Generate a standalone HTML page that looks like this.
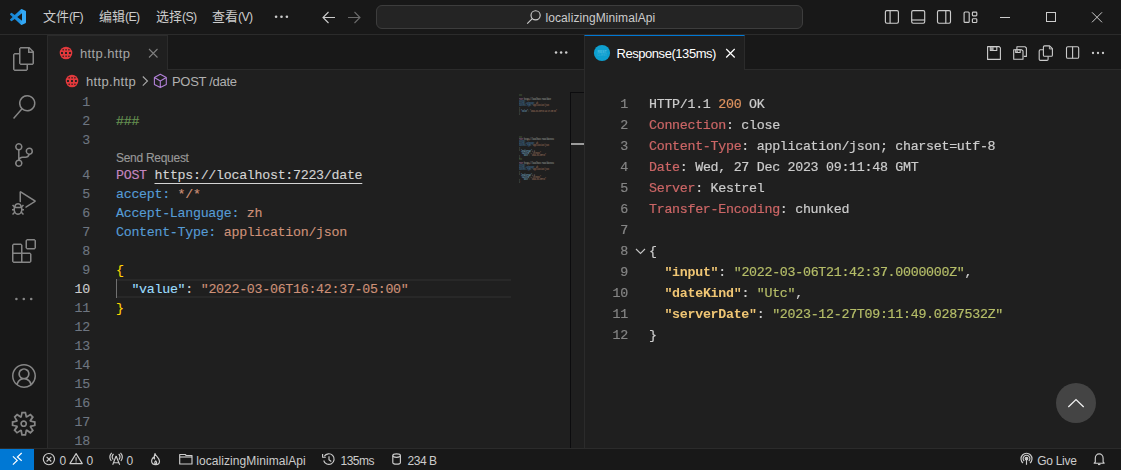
<!DOCTYPE html>
<html lang="zh">
<head>
<meta charset="utf-8">
<title>localizingMinimalApi</title>
<style>
*{box-sizing:border-box;margin:0;padding:0}
html,body{width:1121px;height:470px;overflow:hidden;background:#1f1f1f}
body{position:relative;font-family:"Liberation Sans","Noto Sans CJK SC",sans-serif;color:#cccccc;font-size:13px}
.abs{position:absolute}
#titlebar{left:0;top:0;width:1121px;height:35px;background:#181818;border-bottom:1px solid #2b2b2b}
#activity{left:0;top:35px;width:48px;height:413px;background:#181818;border-right:1px solid #2b2b2b}
#status{left:0;top:448px;width:1121px;height:22px;background:#181818;border-top:1px solid #2b2b2b}
#tabsL{left:48px;top:35px;width:536px;height:35px;background:#181818;border-bottom:1px solid #2b2b2b}
#tabsR{left:585px;top:35px;width:536px;height:35px;background:#181818;border-bottom:1px solid #2b2b2b}
#sep{left:584px;top:35px;width:1px;height:413px;background:#2b2b2b}
.tab{position:absolute;top:0;height:35px;background:#1f1f1f;border-right:1px solid #2b2b2b}
.t{position:absolute;white-space:pre;line-height:1}
.mono{font-family:"Liberation Mono","DejaVu Sans Mono",monospace;font-size:13.3px;letter-spacing:-.284px}
.menu{top:10px;font-size:13px;color:#cccccc}
.la{font-size:12.3px;letter-spacing:-.6px}
.st{top:455px;font-size:12px;color:#cccccc}
.ln{position:absolute;left:48px;width:42px;padding-top:1px;text-align:right;color:#6e7681;white-space:pre;line-height:19px;height:19px}
.cl{position:absolute;left:116px;padding-top:1px;white-space:pre;line-height:19px;height:19px}
.rn{position:absolute;left:585px;width:43px;text-align:right;color:#858585;white-space:pre;line-height:21px;height:21px}
.rl{position:absolute;left:649px;white-space:pre;line-height:21px;height:21px;color:#cccccc}
.g{color:#6a9955}.p{color:#c586c0}.u{color:#d4d4d4;text-decoration:underline;text-underline-offset:4px;text-decoration-thickness:1px}
.b{color:#569cd6}.o{color:#ce9178}.y{color:#ffd700}.k{color:#9cdcfe}.w{color:#cccccc}
.r{color:#cc6666}.n{color:#de935f}.j{color:#f0c674;font-weight:bold;-webkit-text-stroke:0}.s{color:#b5bd68}
svg{position:absolute;overflow:visible}
.mm{position:absolute;left:519px;top:92.6px;white-space:pre;font-family:"Liberation Mono",monospace;font-size:5px;line-height:3px;font-weight:bold;color:#cccccc;opacity:.62;transform:scale(.33328,.66667);transform-origin:0 0}
.mm i{font-style:normal}.u2{color:#d4d4d4}
</style>
</head>
<body>
<!-- TITLE BAR -->
<div id="titlebar" class="abs">
  <svg class="abs" style="left:10px;top:9px" width="16" height="16" viewBox="0 0 100 100"><defs><linearGradient id="vg" x1="0" y1="0" x2="1" y2="0"><stop offset="0" stop-color="#1684d2"/><stop offset=".6" stop-color="#1f92e2"/><stop offset=".75" stop-color="#33a8f5"/><stop offset="1" stop-color="#33a8f5"/></linearGradient></defs><path fill="url(#vg)" d="M96.46 10.8L75.86.87a6.230 6.230 0 0 0-7.100 1.210L29.350 38.040 12.190 25.010a4.160 4.160 0 0 0-5.320.240l-5.500 5.010a4.170 4.170 0 0 0 0 6.160L16.250 50 1.360 63.580a4.170 4.170 0 0 0 0 6.160l5.500 5.010a4.160 4.160 0 0 0 5.320.240l17.160-13.030 39.410 35.960a6.220 6.220 0 0 0 7.100 1.210l20.600-9.910A6.250 6.250 0 0 0 100 83.590V16.410a6.250 6.250 0 0 0-3.540-5.610zM75.020 72.700L45.110 50l29.910-22.700z"/></svg>
  <span class="t menu" style="left:43px">文件<span class="la">(F)</span></span>
  <span class="t menu" style="left:99px">编辑<span class="la">(E)</span></span>
  <span class="t menu" style="left:156px">选择<span class="la">(S)</span></span>
  <span class="t menu" style="left:212px">查看<span class="la">(V)</span></span>
  <svg class="abs" style="left:0;top:0" width="1121" height="35" viewBox="0 0 1121 35" fill="none">
    <g fill="#cccccc"><circle cx="276.1" cy="16.8" r="1.3"/><circle cx="281.5" cy="16.8" r="1.3"/><circle cx="286.9" cy="16.8" r="1.3"/></g>
    <path d="M335 17.5H323M328.5 12L323 17.5L328.5 23" stroke="#cccccc" stroke-width="1.1"/>
    <path d="M348 17.5H360M354.5 12L360 17.5L354.5 23" stroke="#6b6b6b" stroke-width="1.1"/>
    <!-- layout icons -->
    <g stroke="#cccccc" stroke-width="1.15">
      <rect x="885.400" y="10.600" width="13" height="12.600" rx="1.400"/><path d="M890.100 10.600V23.200"/>
      <rect x="911.700" y="10.600" width="13" height="12.600" rx="1.400"/><path d="M911.700 20H924.700"/>
      <rect x="937.500" y="10.600" width="13" height="12.600" rx="1.400"/><path d="M945.800 10.600V23.200"/>
      <rect x="964.100" y="12" width="5.100" height="10.400" rx="1"/><rect x="972.400" y="12.100" width="4.400" height="3.800" rx=".8"/><rect x="972.400" y="18.700" width="4.400" height="3.800" rx=".8"/>
    </g><g stroke="#cccccc" stroke-width="1">
      <!-- window controls -->
      <path d="M1000 17.500H1010"/>
      <rect x="1046.500" y="12.500" width="9" height="9"/>
      <path d="M1092 12.300L1102 22.300M1102 12.300L1092 22.300" stroke-width="1"/>
    </g>
  </svg>
  <div class="abs" style="left:376px;top:5px;width:427px;height:24px;border:1px solid #3d3d3d;border-radius:6px;background:#242424"></div>
  <svg class="abs" style="left:0;top:0" width="1121" height="35" viewBox="0 0 1121 35" fill="none"><circle cx="535.600" cy="15.300" r="4.600" stroke="#cccccc" stroke-width="1.150"/><path d="M532.300 18.700L527.200 23.700" stroke="#cccccc" stroke-width="1.150"/></svg>
  <span class="t" style="left:545.5px;top:12px;font-size:12px;color:#cccccc;letter-spacing:.09px">localizingMinimalApi</span>
</div>
<!-- ACTIVITY BAR -->
<div id="activity" class="abs"></div>
<svg class="abs" style="left:12px;top:47px" width="24" height="24" viewBox="0 0 24 24"><path fill="#868686" d="M17.5 0h-9L7 1.5V6H2.5L1 7.5v15.07L2.5 24h12.07L16 22.57V18h4.7l1.3-1.43V4.5L17.5 0zm0 2.12l2.38 2.38H17.5V2.12zm-3 20.38h-12v-15H7v9.07L8.5 18h6v4.5zm6-6h-12v-15H16V6h4.5v10.5z"/></svg><svg class="abs" style="left:12px;top:95px" width="24" height="24" viewBox="0 0 24 24"><path fill="#868686" d="M15.25 0a8.25 8.25 0 0 0-6.18 13.72L1 22.88l1.12 1 8.05-9.12A8.251 8.251 0 1 0 15.25.01V0zm0 15a6.75 6.75 0 1 1 0-13.5 6.75 6.75 0 0 1 0 13.5z"/></svg><svg class="abs" style="left:12px;top:143px" width="24" height="24" viewBox="0 0 24 24"><path fill="#868686" d="M21.007 8.222A3.738 3.738 0 0 0 15.045 5.2a3.737 3.737 0 0 0 1.156 6.583 2.988 2.988 0 0 1-2.668 1.67h-2.99a4.456 4.456 0 0 0-2.989 1.165V7.4a3.737 3.737 0 1 0-1.494 0v9.117a3.776 3.776 0 1 0 1.816.099 2.99 2.99 0 0 1 2.668-1.667h2.99a4.484 4.484 0 0 0 4.223-3.039 3.736 3.736 0 0 0 3.25-3.687zM4.565 3.738a2.242 2.242 0 1 1 4.484 0 2.242 2.242 0 0 1-4.484 0zm4.484 16.441a2.242 2.242 0 1 1-4.484 0 2.242 2.242 0 0 1 4.484 0zm8.221-9.715a2.242 2.242 0 1 1 0-4.485 2.242 2.242 0 0 1 0 4.485z"/></svg><svg class="abs" style="left:12px;top:191px" width="24" height="24" viewBox="0 0 24 24"><path fill="#868686" d="M10.94 13.5l-1.32 1.32a3.73 3.73 0 0 0-7.24 0L1.06 13.5 0 14.56l1.72 1.72-.22.22V18H0v1.5h1.5v.08c.077.489.214.966.41 1.42L0 22.94 1.06 24l1.65-1.65A4.308 4.308 0 0 0 6 24a4.31 4.31 0 0 0 3.29-1.65L10.94 24 12 22.94 10.09 21c.198-.464.336-.951.41-1.45v-.1H12V18h-1.5v-1.5l-.22-.22L12 14.56l-1.06-1.06zM6 13.5a2.25 2.25 0 0 1 2.25 2.25h-4.5A2.25 2.25 0 0 1 6 13.5zm3 6a3.33 3.33 0 0 1-3 3 3.33 3.33 0 0 1-3-3v-2.250h6v2.250zm14.76-9.9v1.26L13.5 17.37V15.6l8.5-5.370L9 2v9.46a5.070 5.070 0 0 0-1.500-.720V.630L8.640 0l15.120 9.600z"/></svg><svg class="abs" style="left:12px;top:239px" width="24" height="24" viewBox="0 0 24 24"><path fill="#868686" d="M13.5 1.5L15 0h7.5L24 1.5V9l-1.5 1.5H15L13.5 9V1.5zm1.5 0V9h7.5V1.5H15zM0 15V6l1.5-1.5H9L10.5 6v7.5H18l1.5 1.5v7.5L18 24H1.5L0 22.5V15zm9-1.5V6H1.5v7.5H9zM9 15H1.5v7.5H9V15zm1.5 7.5H18V15h-7.5v7.5z"/></svg><svg class="abs" style="left:12px;top:287px" width="24" height="24" viewBox="0 0 24 24"><circle cx="4.4" cy="12" r="1.3" fill="#868686"/><circle cx="11.8" cy="12" r="1.3" fill="#868686"/><circle cx="19.2" cy="12" r="1.3" fill="#868686"/></svg><svg class="abs" style="left:12px;top:364px" width="24" height="24" viewBox="0 0 16 16"><path fill="#868686" fill-rule="evenodd" d="M16 7.992C16 3.580 12.416 0 8 0S0 3.580 0 7.992c0 2.430 1.104 4.620 2.832 6.090.16.016.32.016.32.032.144.112.288.224.448.336.080.048.144.111.224.175A7.980 7.980 0 0 0 8.016 16a7.980 7.980 0 0 0 4.480-1.375c.080-.048.144-.111.224-.160.144-.111.304-.223.448-.335.016-.016.032-.016.032-.032 1.696-1.487 2.800-3.676 2.800-6.106zm-8 7.001c-1.504 0-2.880-.480-4.016-1.279.016-.128.048-.255.080-.383a4.170 4.170 0 0 1 .416-.991c.176-.304.384-.576.640-.816.240-.240.528-.463.816-.639.304-.176.624-.304.976-.400A4.150 4.150 0 0 1 8 10.342a4.185 4.185 0 0 1 2.928 1.166c.368.368.656.800.864 1.295.112.288.192.592.240.911A7.030 7.030 0 0 1 8 14.993zm-2.448-7.400a2.490 2.490 0 0 1-.208-1.024c0-.351.064-.703.208-1.023.144-.320.336-.607.576-.847.240-.240.528-.431.848-.575.320-.144.672-.208 1.024-.208.368 0 .704.064 1.024.208.320.144.608.336.848.575.240.240.432.528.576.847.144.320.208.672.208 1.023 0 .368-.064.704-.208 1.023a2.840 2.840 0 0 1-.576.848 2.840 2.840 0 0 1-.848.575 2.715 2.715 0 0 1-2.064 0 2.840 2.840 0 0 1-.848-.575 2.526 2.526 0 0 1-.560-.848zm7.424 5.306c0-.032-.016-.048-.016-.080a5.220 5.220 0 0 0-.688-1.406 4.883 4.883 0 0 0-1.088-1.135 5.207 5.207 0 0 0-1.040-.608 2.820 2.820 0 0 0 .464-.383 4.200 4.200 0 0 0 .624-.784 3.624 3.624 0 0 0 .528-1.934 3.710 3.710 0 0 0-.288-1.470 3.799 3.799 0 0 0-.816-1.199 3.845 3.845 0 0 0-1.200-.800 3.720 3.720 0 0 0-1.472-.287 3.720 3.720 0 0 0-1.472.288 3.631 3.631 0 0 0-1.200.815 3.840 3.840 0 0 0-.800 1.199 3.710 3.710 0 0 0-.288 1.470c0 .352.048.688.144 1.007.096.336.224.640.400.927.160.288.384.544.624.784.144.144.304.271.480.383a5.120 5.120 0 0 0-1.040.624c-.416.320-.784.703-1.088 1.119a4.999 4.999 0 0 0-.688 1.406c-.16.032-.16.064-.16.080C1.776 11.636.992 9.910.992 7.992.992 4.140 4.144.991 8 .991s7.008 3.149 7.008 7.001a6.960 6.960 0 0 1-2.032 4.907z"/></svg><svg class="abs" style="left:10.4px;top:410px" width="27.4" height="27.4" viewBox="0 0 16 16"><path fill="#868686" fill-rule="evenodd" d="M9.1 4.4L8.6 2H7.4l-.5 2.4-.7.3-2-1.3-.9.8 1.3 2-.2.7-2.4.5v1.2l2.4.5.3.8-1.3 2 .8.8 2-1.3.8.3.4 2.300h1.200l.5-2.400.8-.3 2 1.300.8-.8-1.300-2 .3-.8 2.300-.4V7.400l-2.400-.5-.3-.8 1.300-2-.8-.8-2 1.300-.7-.2zM9.400 1l.5 2.400L12 2.100l2 2-1.400 2.100 2.400.4v2.800l-2.400.5L14 12l-2 2-2.100-1.400-.5 2.400H6.600l-.5-2.400L4 13.900l-2-2 1.400-2.100L1 9.400V6.600l2.400-.5L2.100 4l2-2 2.100 1.400.4-2.400h2.800zm.6 7c0 1.100-.9 2-2 2s-2-.9-2-2 .9-2 2-2 2 .9 2 2zM8 9c.6 0 1-.4 1-1s-.4-1-1-1-1 .4-1 1 .4 1 1 1z"/></svg>
<!-- LEFT TABS -->
<div id="tabsL" class="abs">
  <div class="tab" style="left:0;width:120px;border-top:1px solid #2b2b2b"></div>
</div>
<svg class="abs" style="left:58px;top:44.9px" width="16" height="16" viewBox="-8 -8 16 16"><circle r="6.3" fill="#e2393c"/><g fill="#1f1f1f"><rect x="-4.95" y="-0.95" width="1.9" height="1.9" rx=".3"/><rect x="-0.95" y="-0.95" width="1.9" height="1.9" rx=".3"/><rect x="2.95" y="-0.95" width="1.9" height="1.9" rx=".3"/><rect x="-3.55" y="-4.00" width="1.5" height="1.5" rx=".3" opacity=".8"/><rect x="-0.65" y="-4.00" width="1.5" height="1.5" rx=".3" opacity=".8"/><rect x="2.15" y="-4.00" width="1.5" height="1.5" rx=".3" opacity=".8"/><rect x="-3.55" y="2.60" width="1.5" height="1.5" rx=".3" opacity=".8"/><rect x="-0.65" y="2.60" width="1.5" height="1.5" rx=".3" opacity=".8"/><rect x="2.15" y="2.60" width="1.5" height="1.5" rx=".3" opacity=".8"/></g></svg>
<span class="t" style="left:80px;top:47px;font-size:13px;color:#a6a6a6;letter-spacing:.37px">http.http</span>
<svg class="abs" style="left:0;top:0" width="1121" height="470" viewBox="0 0 1121 470" fill="none">
  <path d="M149 49L157.500 57.500M157.500 49L149 57.500" stroke="#7f7f7f" stroke-width="1.1"/>
  <g fill="#cccccc"><circle cx="556" cy="52.600" r="1.250"/><circle cx="561.100" cy="52.600" r="1.250"/><circle cx="566.200" cy="52.600" r="1.250"/></g>
  <!-- breadcrumb chevron + cube -->
  <path d="M142.800 76.500L147.500 81L142.800 85.700" stroke="#a9a9a9" stroke-width="1.1"/>
  <path d="M160.300 74.300L166.300 77.600V84.400L160.300 87.600L154.400 84.400V77.600ZM154.400 77.600L160.300 80.900L166.300 77.600M160.300 80.900V87.600" stroke="#b180d7" stroke-width="1.1" stroke-linejoin="round"/>
  <!-- right tab close + actions -->
</svg>
<!-- BREADCRUMB -->
<svg class="abs" style="left:64.2px;top:73.1px" width="16" height="16" viewBox="-8 -8 16 16"><circle r="6.3" fill="#e2393c"/><g fill="#1f1f1f"><rect x="-4.95" y="-0.95" width="1.9" height="1.9" rx=".3"/><rect x="-0.95" y="-0.95" width="1.9" height="1.9" rx=".3"/><rect x="2.95" y="-0.95" width="1.9" height="1.9" rx=".3"/><rect x="-3.55" y="-4.00" width="1.5" height="1.5" rx=".3" opacity=".8"/><rect x="-0.65" y="-4.00" width="1.5" height="1.5" rx=".3" opacity=".8"/><rect x="2.15" y="-4.00" width="1.5" height="1.5" rx=".3" opacity=".8"/><rect x="-3.55" y="2.60" width="1.5" height="1.5" rx=".3" opacity=".8"/><rect x="-0.65" y="2.60" width="1.5" height="1.5" rx=".3" opacity=".8"/><rect x="2.15" y="2.60" width="1.5" height="1.5" rx=".3" opacity=".8"/></g></svg>
<span class="t" style="left:86px;top:75px;font-size:13px;color:#b0b0b0;letter-spacing:.33px">http.http</span>
<span class="t" style="left:172px;top:75px;font-size:13px;color:#b0b0b0;letter-spacing:-.3px">POST /date</span>
<!-- LEFT EDITOR -->
<div class="abs" style="left:116px;top:279px;width:395px;height:19px;border-top:2px solid #282828;border-bottom:2px solid #282828"></div>
<div class="abs" style="left:116px;top:279px;width:1px;height:19px;background:#707070"></div>
<div id="edL" class="mono" style="-webkit-text-stroke:.12px">
<div class="ln" style="top:92px">1</div>
<div class="ln" style="top:111px">2</div><div class="cl g" style="top:111px">###</div>
<div class="ln" style="top:130px">3</div>
<div class="t" style="left:116px;top:152px;font-family:'Liberation Sans',sans-serif;font-size:12px;color:#999999">Send Request</div>
<div class="ln" style="top:165px">4</div><div class="cl" style="top:165px"><span class="p">POST</span> <span class="u">https://localhost:7223/date</span></div>
<div class="ln" style="top:184px">5</div><div class="cl" style="top:184px"><span class="b">accept:</span> <span class="o">*/*</span></div>
<div class="ln" style="top:203px">6</div><div class="cl" style="top:203px"><span class="b">Accept-Language:</span> <span class="o">zh</span></div>
<div class="ln" style="top:222px">7</div><div class="cl" style="top:222px"><span class="b">Content-Type:</span> <span class="o">application/json</span></div>
<div class="ln" style="top:241px">8</div>
<div class="ln" style="top:260px">9</div><div class="cl y" style="top:260px">{</div>
<div class="ln" style="top:279px;color:#cccccc">10</div><div class="cl" style="top:279px">  <span class="k">"value"</span><span class="w">:</span> <span class="o">"2022-03-06T16:42:37-05:00"</span></div>
<div class="ln" style="top:298px">11</div><div class="cl y" style="top:298px">}</div>
<div class="ln" style="top:317px">12</div>
<div class="ln" style="top:336px">13</div>
<div class="ln" style="top:355px">14</div>
<div class="ln" style="top:374px">15</div>
<div class="ln" style="top:393px">16</div>
<div class="ln" style="top:412px">17</div>
<div class="ln" style="top:431px">18</div>
</div>
<div class="mm">
<i class="g">###</i>

<i class="p">POST</i> <i class="u2">https://localhost:7223/date</i>
<i class="b">accept:</i> <i class="o">*/*</i>
<i class="b">Accept-Language:</i> <i class="o">zh</i>
<i class="b">Content-Type:</i> <i class="o">application/json</i>

<i class="w">{</i>
  <i class="k">"value"</i>: <i class="o">"2022-03-06T16:42:37-05:00"</i>
<i class="w">}</i>











<i class="g">###</i>
<i class="p">POST</i> <i class="u2">https://localhost:7223/dateutc</i>
<i class="b">accept:</i> <i class="o">*/*</i>
<i class="b">Accept-Language:</i> <i class="o">zh</i>
<i class="b">Content-Type:</i> <i class="o">application/json</i>

<i class="w">{</i>
  <i class="k">"mediaType"</i>: <i class="w">1,</i>
  <i class="k">"culture"</i>: <i class="o">"zh-Hans"</i>,
    <i class="k">"date"</i>: <i class="o">"2022-03-06T16"</i>
<i class="w">}</i>
<i class="g">###</i>

<i class="p">POST</i> <i class="u2">https://localhost:7223/dateutc</i>
<i class="b">accept:</i> <i class="o">*/*</i>
<i class="b">Accept-Language:</i> <i class="o">zh</i>
<i class="b">Content-Type:</i> <i class="o">application/json</i>

<i class="w">{</i>
  <i class="k">"mediaType"</i>: <i class="w">1,</i>
  <i class="k">"culture"</i>: <i class="o">"zh-Hans"</i>,
    <i class="k">"date"</i>: <i class="o">"2022-03-06T16"</i>
<i class="w">}</i></div>
<!-- overview ruler -->
<div class="abs" style="left:570px;top:92px;width:14px;height:356px;border-left:1px solid #0c0c0e;border-top:1px solid #0c0c0e"></div>
<div class="abs" style="left:571px;top:143px;width:13px;height:2px;background:#9c9c9c"></div>
<div id="sep" class="abs"></div>
<!-- RIGHT TABS -->
<div id="tabsR" class="abs">
  <div class="tab" style="left:-1px;width:161px;border-top:1px solid #0078d4;border-left:1px solid #2b2b2b"></div>
</div>
<svg class="abs" style="left:594px;top:45px" width="16" height="16" viewBox="0 0 16 16"><circle cx="8" cy="8" r="8.1" fill="#0e9fcf"/><text x="8" y="7.600" font-size="3.400" font-weight="bold" fill="#4fbce0" text-anchor="middle" font-family="Liberation Sans, sans-serif">REST</text><text x="8" y="11" font-size="2.800" fill="#3fb4dc" text-anchor="middle" font-family="Liberation Sans, sans-serif">CLIENT</text></svg>
<span class="t" style="left:616.5px;top:47px;font-size:13px;color:#ffffff;letter-spacing:-.45px">Response(135ms)</span>
<!-- RIGHT PANE -->
<div id="edR" class="mono" style="will-change:transform;-webkit-text-stroke:.2px">
<div class="rn" style="top:94px">1</div><div class="rl" style="top:94px">HTTP/1.1 <span class="n">200</span> OK</div>
<div class="rn" style="top:115px">2</div><div class="rl" style="top:115px"><span class="r">Connection</span>: close</div>
<div class="rn" style="top:136px">3</div><div class="rl" style="top:136px"><span class="r">Content-Type</span>: application/json; charset=utf-8</div>
<div class="rn" style="top:157px">4</div><div class="rl" style="top:157px"><span class="r">Date</span>: Wed, 27 Dec 2023 09:11:48 GMT</div>
<div class="rn" style="top:178px">5</div><div class="rl" style="top:178px"><span class="r">Server</span>: Kestrel</div>
<div class="rn" style="top:199px">6</div><div class="rl" style="top:199px"><span class="r">Transfer-Encoding</span>: chunked</div>
<div class="rn" style="top:220px">7</div>
<div class="rn" style="top:241px">8</div><div class="rl" style="top:241px">{</div>
<div class="rn" style="top:262px">9</div><div class="rl" style="top:262px">  <span class="j">"input"</span>: <span class="s">"2022-03-06T21:42:37.0000000Z"</span>,</div>
<div class="rn" style="top:283px">10</div><div class="rl" style="top:283px">  <span class="j">"dateKind"</span>: <span class="s">"Utc"</span>,</div>
<div class="rn" style="top:304px">11</div><div class="rl" style="top:304px">  <span class="j">"serverDate"</span>: <span class="s">"2023-12-27T09:11:49.0287532Z"</span></div>
<div class="rn" style="top:325px">12</div><div class="rl" style="top:325px">}</div>
</div>
<svg class="abs" style="left:0;top:0" width="1121" height="470" viewBox="0 0 1121 470" fill="none">
  <path d="M726.200 49L734.700 57.500M734.700 49L726.200 57.500" stroke="#ffffff" stroke-width="1.2"/>
  <path d="M636 249L640.500 253.500L645 249" stroke="#c5c5c5" stroke-width="1.1"/>
  <circle cx="1076" cy="403" r="20" fill="#444444"/>
  <path d="M1068.300 407L1076 399.600L1083.700 407" stroke="#f0f0f0" stroke-width="1.300"/>
  <!-- editor actions -->
  <g stroke="#cccccc" stroke-width="1.1" stroke-linejoin="round">
    <path d="M987.600 46.600H999.200L1000.400 47.800V59.400H987.600Z"/><rect x="990.300" y="46.600" width="6.500" height="3.900"/><rect x="990.800" y="47.100" width="2.800" height="3" fill="#a6a6a6" stroke="none"/>
    <path d="M1016.900 49.200V46.800H1025.200L1026.400 48V56.400H1023.800"/><path d="M1013.700 49.800H1021.800L1023 51V59.200H1013.700Z"/><rect x="1015.700" y="49.800" width="4.500" height="2.700"/><rect x="1016.200" y="50.300" width="1.700" height="1.800" fill="#a6a6a6" stroke="none"/>
    <path d="M1044.600 45.900H1049.600L1052.400 48.700V55.200Q1052.400 56.300 1051.300 56.300H1044.600Q1043.400 56.300 1043.400 55.200V47Q1043.400 45.900 1044.600 45.900Z"/><path d="M1049.400 46.200V48.900H1052.200" stroke-width=".9"/><path d="M1043.200 49.800H1040.400Q1039.200 49.800 1039.200 51V59.200Q1039.200 60.400 1040.400 60.400H1047Q1048.100 60.400 1048.100 59.200V56.500"/>
    <rect x="1066.500" y="46.700" width="12.200" height="11.600" rx="1.400"/><path d="M1072.600 46.700V58.300"/>
  </g>
  <g fill="#cccccc"><circle cx="1093" cy="53" r="1.150"/><circle cx="1098" cy="53" r="1.150"/><circle cx="1103" cy="53" r="1.150"/></g>
</svg>
<!-- STATUS BAR -->
<div id="status" class="abs"></div>
<div class="abs" style="left:0;top:449px;width:34px;height:21px;background:#0078d4"></div>
<svg class="abs" style="left:0;top:0" width="1121" height="470" viewBox="0 0 1121 470" fill="none" stroke-linejoin="round">
  <path d="M12.900 456.400L17.200 460.400L12.900 464.600M21.700 453L17.400 457L21.700 460.800" stroke="#ffffff" stroke-width="1.200" stroke-linejoin="miter"/>
  <g stroke="#cccccc" stroke-width="1.15">
    <circle cx="48.900" cy="459.100" r="5.600"/><path d="M46.600 456.800L51.300 461.500M51.300 456.800L46.600 461.500"/>
    <path d="M76.100 453.600L82.300 463.600H69.900Z"/><path d="M76.100 457.300V460.800M76.100 461.500V462.500"/>
    <!-- radio tower -->
    <path d="M116.100 456L112.700 464.700M116.100 456L119.700 464.700M113.600 462.700H118.800" stroke-width="1.100"/>
    <path d="M113.500 454A4.200 4.200 0 0 0 113.300 459.600M118.700 454A4.200 4.200 0 0 1 118.900 459.600M111.700 452.900A6.500 6.500 0 0 0 111.300 461M120.500 452.900A6.500 6.500 0 0 1 120.900 461"/>
    <!-- flame -->
    <path d="M155 453.500C155.500 456 159.500 458 159.500 461.200C159.500 463.300 157.800 464.600 155.800 464.600C153.500 464.600 151.600 463.300 151.600 461C151.600 459.300 152.600 458.300 153.300 457.200C153.600 458.200 154 458.700 154.600 459C154.200 457 154.200 455 155 453.500Z"/><path d="M155.600 464.400C154.500 463.500 154.500 462 155.700 460.800C156.700 462 157 463.400 155.900 464.400"/>
    <!-- folder -->
    <path d="M179.700 454.500H185.200L186.200 455.500H192V464H179.700Z"/><path d="M179.700 457H192"/>
    <!-- history -->
    <path d="M324.300 456.300A5.300 5.300 0 1 1 323.700 460.500"/><path d="M322.600 454V457.200H325.800"/><path d="M329 456.300V459.700L331.300 461.500"/>
    <!-- database -->
    <ellipse cx="396.600" cy="455.600" rx="3.800" ry="1.700"/><path d="M392.800 455.600V462.400C392.800 464.700 400.400 464.700 400.400 462.400V455.600"/>
    <!-- broadcast -->
    <circle cx="1026.500" cy="458.600" r="1.300" fill="#cccccc"/><path d="M1026.500 460V464.800"/><path d="M1024.200 461.200A3.400 3.400 0 1 1 1028.800 461.200"/><path d="M1023 463A5.500 5.500 0 1 1 1030 463"/>
    <!-- bell -->
    <path d="M1095.300 462V458.200A3.900 4.300 0 0 1 1103.100 458.200V462L1104.200 463.200H1094.200Z"/><path d="M1098 464.500H1100.400"/>
  </g>
</svg>
<span class="t st" style="left:59.500px">0</span>
<span class="t st" style="left:86.500px">0</span>
<span class="t st" style="left:126.500px">0</span>
<span class="t st" style="left:196.200px;letter-spacing:.08px">localizingMinimalApi</span>
<span class="t st" style="left:340.500px;letter-spacing:-.5px">135ms</span>
<span class="t st" style="left:407.500px;letter-spacing:-.45px">234 B</span>
<span class="t st" style="left:1037.300px;letter-spacing:-.3px">Go Live</span>
</body>
</html>
